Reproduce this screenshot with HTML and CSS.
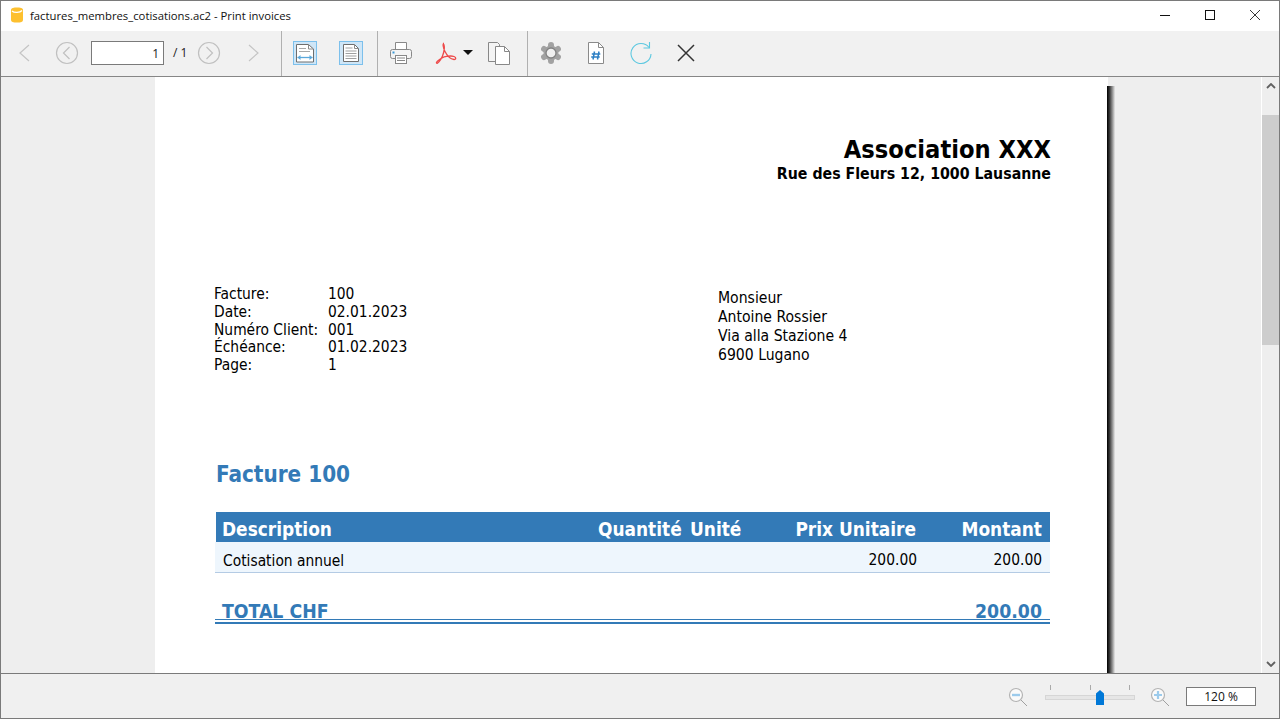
FILE: index.html
```html
<!DOCTYPE html>
<html lang="fr">
<head>
<meta charset="utf-8">
<title>Print invoices</title>
<link rel="stylesheet" href="styles.css">
</head>
<body>
<div class="window">
  <header class="titlebar">
    <svg class="app-icon" width="12" height="16" viewBox="0 0 12 16"><path d="M0 3C0 1 3 .5 6 .5S12 1 12 3v10c0 2-2 2.500-6 2.500S0 15 0 13z" fill="#fdc02f"/><path d="M1 4c2 2 8 2 10-.5" fill="none" stroke="#fff" stroke-width="1.300"/></svg>
    <span class="title">factures_membres_cotisations.ac2 - Print invoices</span>
    <div class="winbtns">
      <svg width="12" height="12" viewBox="0 0 12 12"><path d="M1 6.500h10" stroke="#111" fill="none"/></svg>
      <svg width="12" height="12" viewBox="0 0 12 12"><rect x="1.500" y="1.500" width="9" height="9" stroke="#111" fill="none"/></svg>
      <svg width="12" height="12" viewBox="0 0 12 12"><path d="M1 1l10 10M11 1L1 11" stroke="#222" fill="none" stroke-width=".9"/></svg>
    </div>
  </header>

  <nav class="toolbar">
    <section class="tgroup nav-group">
      <svg class="ic" width="12" height="18" viewBox="0 0 12 18"><path d="M11 1L2 9l9 8" fill="none" stroke="#c4c4c4" stroke-width="1.200"/></svg>
      <svg class="ic prev-round" width="24" height="24" viewBox="0 0 24 24"><circle cx="12" cy="12" r="10.500" fill="none" stroke="#c0c0c0" stroke-width="1.200"/><path d="M14.500 6l-6 6 6 6" fill="none" stroke="#c0c0c0" stroke-width="1.200"/></svg>
      <span class="pagebox">1</span>
      <span class="pagecount">/ 1</span>
      <svg class="ic" width="24" height="24" viewBox="0 0 24 24"><circle cx="12" cy="12" r="10.500" fill="none" stroke="#c0c0c0" stroke-width="1.200"/><path d="M9.500 6l6 6-6 6" fill="none" stroke="#c0c0c0" stroke-width="1.200"/></svg>
      <svg class="ic next-end" width="12" height="18" viewBox="0 0 12 18"><path d="M1 1l9 8-9 8" fill="none" stroke="#c4c4c4" stroke-width="1.200"/></svg>
    </section>
    <section class="tgroup view-group">
      <span class="toggle"><svg width="22" height="22" viewBox="0 0 22 22"><path d="M2.500 2.500h12l5 4.500v13h-17z" fill="#fff" stroke="#6e6e6e"/><path d="M14.500 2.500v4.500h5" fill="none" stroke="#8a8a8a"/><path d="M5 6.500h7M5 9.500h11" stroke="#a8a8a8"/><path d="M3.500 15.500h15" stroke="#5aa8dc" stroke-width="1.300"/><path d="M6.500 13l-3 2.500 3 2.500zM15.500 13l3 2.500-3 2.500z" fill="#5aa8dc"/></svg></span>
      <span class="toggle"><svg width="22" height="22" viewBox="0 0 22 22"><path d="M3.500 2.500h11l4 4v13h-15z" fill="#fff" stroke="#6e6e6e"/><path d="M14.500 2.500v4h4" fill="none" stroke="#8a8a8a"/><path d="M5.500 6h7M5.500 9h11M5.500 11.500h11M5.500 14h11M5.500 16.500h11" stroke="#a0a0a0" stroke-width="1.200"/></svg></span>
    </section>
    <section class="tgroup out-group">
      <svg width="24" height="24" viewBox="0 0 24 24"><path d="M6.500 8V1.500h11V8" fill="#fff" stroke="#888"/><rect x="1.500" y="8.500" width="21" height="9" rx="2" fill="#f4f4f4" stroke="#888"/><rect x="6.500" y="14.500" width="11" height="8" fill="#fff" stroke="#888"/><path d="M8 17h8M8 19.500h8" stroke="#888"/><rect x="3.500" y="10.500" width="2" height="2" fill="#3c9ad8"/></svg>
      <span class="pdf">
        <svg width="22" height="22" viewBox="0 0 22 22"><path d="M9 1.500c-1.500 0-1 4 1 8 2 4 5 7.500 9 8 2 .2 2.500-2 0-3-3-1-9-.5-13 2-3 2-5 4-4.500 4.500 1 1 3.500-1.500 6-7 1.500-3.500 3-11.500.5-12.500z" fill="none" stroke="#ee4a4a" stroke-width="1.300"/></svg>
        <i class="caret"></i>
      </span>
      <svg width="24" height="24" viewBox="0 0 24 24"><path d="M1.500 1.500h9l2 2v17h-11z" fill="#f4f4f4" stroke="#888"/><path d="M8.500 5.500h9l5 5v13h-14z" fill="#fff" stroke="#888"/><path d="M17.500 5.500v5h5" fill="none" stroke="#888"/></svg>
    </section>
    <section class="tgroup tool-group">
      <svg width="24" height="24" viewBox="0 0 24 24"><g stroke="#a2a2a2" stroke-width="6" stroke-linecap="round"><path d="M12 4v16"/><path d="M12 4v16" transform="rotate(60 12 12)"/><path d="M12 4v16" transform="rotate(120 12 12)"/></g><circle cx="12" cy="12" r="7.500" fill="#a2a2a2"/><circle cx="12" cy="12" r="5" fill="#f0f0f0" stroke="#828282" stroke-width="1.300"/></svg>
      <svg width="18" height="24" viewBox="0 0 18 24"><path d="M1.500 1.500h10l5 5v16h-15z" fill="#fff" stroke="#8a8a8a"/><path d="M11.500 1.500v5h5" fill="none" stroke="#8a8a8a"/><path d="M7.500 10.500l-1.500 8M12 10.500l-1.500 8M4.800 13h8.500M4.200 16h8.500" stroke="#2c7fc4" stroke-width="1.500" fill="none"/></svg>
      <svg width="24" height="24" viewBox="0 0 24 24"><path d="M20 6.500A10 10 0 1 0 22 13" fill="none" stroke="#5cc8e0" stroke-width="1.100"/><path d="M14.500 7h6V1" fill="none" stroke="#5cc8e0" stroke-width="1.100"/></svg>
      <svg width="18" height="18" viewBox="0 0 18 18"><path d="M1 1l16 16M17 1L1 17" stroke="#333" stroke-width="1.500" fill="none"/></svg>
    </section>
  </nav>

  <main class="viewer">
    <div class="canvas">
      <article class="sheet">
        <div class="org">
          <h1>Association XXX</h1>
          <p>Rue des Fleurs 12, 1000 Lausanne</p>
        </div>
        <div class="meta-row">
          <dl class="meta">
            <dt>Facture:</dt><dd>100</dd>
            <dt>Date:</dt><dd>02.01.2023</dd>
            <dt>Numéro Client:</dt><dd>001</dd>
            <dt>Échéance:</dt><dd>01.02.2023</dd>
            <dt>Page:</dt><dd>1</dd>
          </dl>
          <address class="addr">Monsieur<br>Antoine Rossier<br>Via alla Stazione 4<br>6900 Lugano</address>
        </div>
        <h2 class="doc-title">Facture 100</h2>
        <div class="items">
          <div class="row head">
            <span class="c-desc">Description</span><span class="c-qty">Quantité</span><span class="c-unit">Unité</span><span class="c-price">Prix Unitaire</span><span class="c-amt">Montant</span>
          </div>
          <div class="row line">
            <span class="c-desc">Cotisation annuel</span><span class="c-qty"></span><span class="c-unit"></span><span class="c-price">200.00</span><span class="c-amt">200.00</span>
          </div>
          <div class="total">
            <span>TOTAL CHF</span><span>200.00</span>
          </div>
        </div>
      </article>
    </div>
    <aside class="scrollbar">
      <svg width="10" height="6" viewBox="0 0 10 6"><path d="M1 5l4-4 4 4" fill="none" stroke="#606060" stroke-width="1.800"/></svg>
      <div class="thumb"></div>
      <svg class="down" width="10" height="6" viewBox="0 0 10 6"><path d="M1 1l4 4 4-4" fill="none" stroke="#606060" stroke-width="1.800"/></svg>
    </aside>
  </main>

  <footer class="statusbar">
    <svg width="20" height="20" viewBox="0 0 20 20"><circle cx="8" cy="8" r="6.500" fill="#fafafa" stroke="#b4b4b4" stroke-width="1.200"/><path d="M4 8h8" stroke="#9ccbec" stroke-width="2.400"/><path d="M13 13l6 6" stroke="#a0a0a0"/></svg>
    <div class="slider">
      <div class="ticks"><i></i><i></i><i></i></div>
      <div class="track"><svg class="handle" width="8" height="15" viewBox="0 0 8 15"><path d="M0 3.500L4 0l4 3.500V15H0z" fill="#0078d7"/></svg></div>
    </div>
    <svg width="20" height="20" viewBox="0 0 20 20"><circle cx="8" cy="8" r="6.500" fill="#fafafa" stroke="#b4b4b4" stroke-width="1.200"/><path d="M4 8h8M8 4v8" stroke="#9ccbec" stroke-width="2.200"/><path d="M13 13l6 6" stroke="#a0a0a0"/></svg>
    <span class="zoombox">120 %</span>
  </footer>
</div>
</body>
</html>
```
FILE: styles.css
```css
* { box-sizing: border-box; }
html, body { margin: 0; height: 100%; overflow: hidden; }
body { font-family: "Open Sans", "Noto Sans", sans-serif; }

.window {
  width: 1280px; height: 719px;
  border: 1px solid #7a7a7a;
  display: flex; flex-direction: column;
  background: #f0f0f0;
}

.titlebar {
  height: 30px; flex: none; background: #fff;
  display: flex; align-items: center;
  padding: 0 0 2px 10px; font-size: 11.3px; color: #111;
}
.app-icon { margin-right: 7px; }
.title { flex: 1; }
.winbtns { display: flex; align-items: center; gap: 33px; padding-right: 18px; }
.winbtns svg { display: block; }

.toolbar {
  height: 46px; flex: none; background: #f1f1f1;
  border-bottom: 1px solid #868686;
  display: flex; align-items: stretch;
}
.tgroup { display: flex; align-items: center; border-right: 1px solid #b0b0b0; padding-bottom: 2px; }
.tgroup svg { display: block; flex: none; }
.tool-group { border-right: 0; padding-left: 11px; gap: 24px; }
.nav-group { width: 281px; padding-left: 17px; }
.prev-round { margin-left: 25px; margin-right: 12px; }
.pagebox {
  width: 73px; height: 24px; background: #fff; border: 1px solid #7a7a7a;
  font-size: 12px; text-align: right; padding: 4px 4px 0 0; color: #222;
  line-height: 15px;
}
.pagecount { font-size: 12px; margin-left: 9px; margin-right: 10px; color: #222; }
.next-end { margin-left: 27px; }

.view-group { width: 96px; padding-left: 11px; gap: 22px; }
.toggle {
  width: 24px; height: 24px; background: #cfe6f7; border: 1px solid #7cc0ec;
  display: flex; align-items: center; justify-content: center;
  flex: none;
}
.out-group { width: 150px; padding-left: 11px; }
.pdf { display: flex; align-items: center; margin-left: 22px; margin-right: 14px; }
.caret {
  margin-left: 6px; width: 0; height: 0;
  border-left: 5px solid transparent; border-right: 5px solid transparent;
  border-top: 5px solid #111;
}

.viewer { height: 597px; flex: none; display: flex; border-bottom: 1px solid #7a7a7a; background: #eee; }
.canvas { flex: 1; overflow: hidden; padding-left: 154px; }

.sheet {
  width: 953px; height: 596px; background: #fff;
  font-family: "DejaVu Sans Condensed", "DejaVu Sans", sans-serif;
  color: #000; padding: 57px 57px 0 59px;
  position: relative;
}
.sheet::after {
  content: ""; position: absolute; left: 952px; top: 9px; bottom: 0; width: 8px;
  background: linear-gradient(90deg, #000 0%, #333 30%, #999 70%, #e8e8e8 100%);
}

.org { text-align: right; }
.org h1 { margin: 0; font-size: 25.2px; line-height: 31px; font-weight: 700; }
.org p { margin: 0; font-size: 15.75px; line-height: 17px; font-weight: 700; }

.meta-row { display: flex; justify-content: space-between; margin-top: 104px; }
.meta {
  margin: 0; display: grid; grid-template-columns: 114px auto; grid-auto-rows: 17.75px;
  align-content: start; font-size: 15.4px; line-height: 17.75px; height: 110px;
}
.meta dt, .meta dd { margin: 0; }
.addr { font-style: normal; font-size: 15.6px; line-height: 19px; width: 333px; padding-top: 3px; }

.doc-title { margin: 64px 0 0 2px; font-size: 22.3px; line-height: 28px; font-weight: 700; color: #337ab7; }

.items { margin: 24px 1px 0 1px; }
.items::after { content: ""; display: block; height: 2px; margin-top: 2px; background: #337ab7; }
.row { display: flex; align-items: center; padding-right: 8px; }
.row.head {
  height: 30px; padding-top: 4px; margin-left: 1px; background: #337ab7; color: #fff; font-weight: 700; font-size: 18.9px;
}
.row.line {
  height: 31px; padding-top: 6px; background: #eef6fd; border-bottom: 1px solid #b4cbe4; font-size: 15.4px;
}
.c-desc { width: 382px; padding-left: 6px; }
.row.line .c-desc { width: 383px; padding: 2px 0 0 8px; }
.c-qty { width: 92px; white-space: nowrap; }
.c-unit { width: 80px; }
.c-price { width: 146px; text-align: right; white-space: nowrap; }
.row.line .c-price { width: 147px; }
.c-amt { flex: 1; text-align: right; }

.total {
  margin-top: 26px; height: 21px; display: flex; justify-content: space-between; align-items: flex-end;
  padding: 0 8px 0 7px; color: #337ab7; font-size: 19.3px; font-weight: 700; line-height: 14px;
  border-bottom: 1px solid #337ab7;
}

.scrollbar {
  width: 18px; flex: none; background: #eee; border-left: 1px solid #fff;
  display: flex; flex-direction: column; align-items: center; padding-top: 6px;
}
.scrollbar svg { display: block; flex: none; }
.thumb { width: 100%; height: 230px; background: #cdcdcd; margin-top: 26px; flex: none; }
.scrollbar .down { margin-top: auto; margin-bottom: 6px; }

.statusbar {
  flex: 1; display: flex; align-items: center; justify-content: flex-end;
  padding-right: 23px; background: #f0f0f0;
}
.statusbar > svg { display: block; flex: none; margin-top: 1px; }
.slider { width: 90px; margin: 0 15px 0 17px; }
.ticks { display: flex; justify-content: space-between; padding: 0 5px 0 5px; height: 6px; margin-bottom: 2px; }
.ticks i { width: 1px; height: 5px; background: #aaa; }
.track { height: 5px; background: #e6e6e6; border: 1px solid #d6d6d6; position: relative; margin-bottom: 8px; margin-top: 4px; }
.handle { position: absolute; left: 50px; top: -6px; }
.zoombox {
  width: 70px; height: 19px; margin-left: 16px; background: #fff; border: 1px solid #7a7a7a;
  font-size: 12px; text-align: center; line-height: 17px; color: #111;
}
```
